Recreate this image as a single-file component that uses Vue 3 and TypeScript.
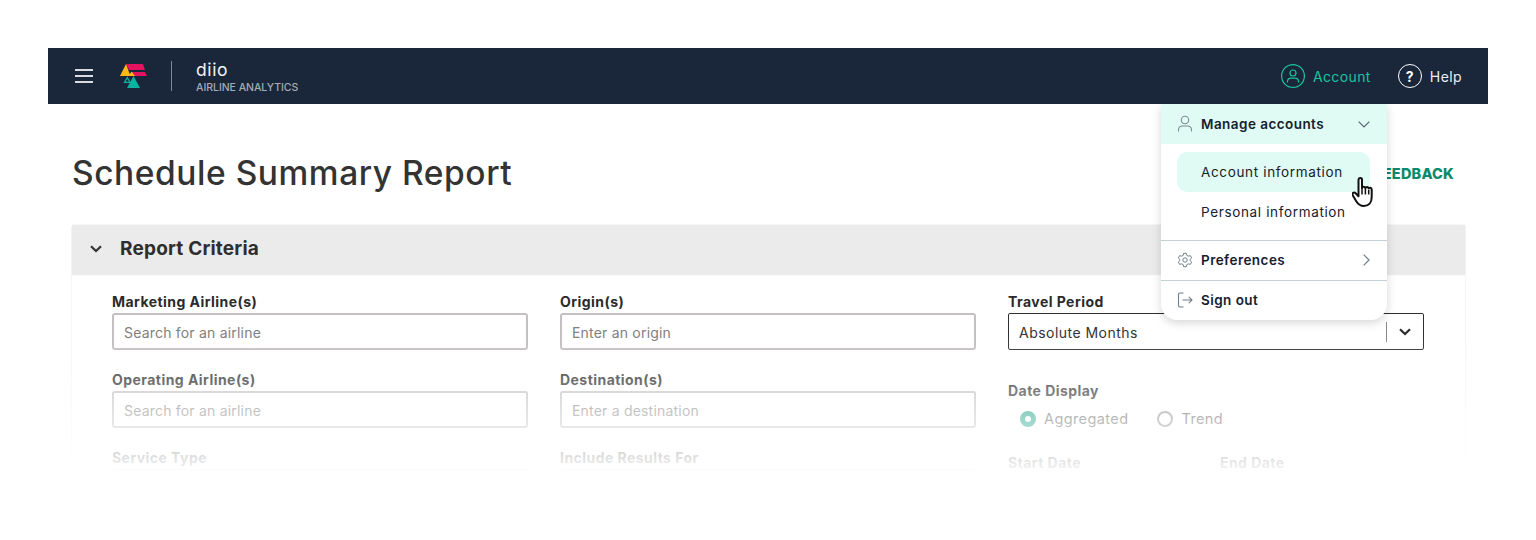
<script setup lang="ts">
interface Field { label: string; placeholder: string }
const col1: Field[] = [
  { label: 'Marketing Airline(s)', placeholder: 'Search for an airline' },
  { label: 'Operating Airline(s)', placeholder: 'Search for an airline' },
  { label: 'Service Type', placeholder: '' },
]
const col2: Field[] = [
  { label: 'Origin(s)', placeholder: 'Enter an origin' },
  { label: 'Destination(s)', placeholder: 'Enter a destination' },
  { label: 'Include Results For', placeholder: '' },
]
</script>

<template>
  <div class="page">
    <div class="shell">
      <header class="nav">
        <button class="burger" aria-label="menu"><i></i><i></i><i></i></button>
        <svg class="logo" viewBox="120 64 28 24" width="28" height="24">
          <polygon points="126,64 143,64 145,70 129,70" fill="#e5135f" />
          <polygon points="131,72 145,72 147,76 133,76" fill="#e5135f" />
          <polygon points="126,64 130.5,76 120,76" fill="#fdb913" />
          <polygon points="131.5,71.5 135,76 128.5,76" fill="#fdb913" />
          <polygon points="133.5,76 140,88 127,88" fill="#0db39e" />
          <path d="M127.3 77.5 L130 82.3 L124.5 82.3 Z" fill="none" stroke="#0db39e" stroke-width="1.3" />
        </svg>
        <span class="vline"></span>
        <div class="brand">
          <div class="brand-name">diio</div>
          <div class="brand-sub">AIRLINE ANALYTICS</div>
        </div>
        <div class="nav-right">
          <a class="nav-link account">
            <svg width="24" height="24" viewBox="0 0 24 24" fill="none" stroke="#19c4a0" stroke-width="1.2">
              <circle cx="12" cy="12" r="11.4" />
              <circle cx="12" cy="9" r="3" />
              <path d="M6.500 18.500v-1.200c0-2 1.800-3.200 3.600-3.200h3.800c1.800 0 3.600 1.200 3.600 3.200v1.200" />
            </svg>
            Account
          </a>
          <a class="nav-link help">
            <span class="help-circle">?</span>
            Help
          </a>
        </div>
      </header>

      <main class="main">
        <div class="title-row">
          <h1>Schedule Summary Report</h1>
          <a class="feedback">FEEDBACK</a>
        </div>

        <section class="card">
          <div class="card-head">
            <svg width="12" height="8" viewBox="0 0 12 8" fill="none" stroke="#333" stroke-width="2.2">
              <path d="M1 1.200l5 4.800 5-4.800" />
            </svg>
            <h2>Report Criteria</h2>
          </div>
          <div class="grid">
            <div class="col">
              <div v-for="f in col1" :key="f.label" class="field">
                <label>{{ f.label }}</label>
                <div class="input">{{ f.placeholder }}</div>
              </div>
            </div>
            <div class="col">
              <div v-for="f in col2" :key="f.label" class="field">
                <label>{{ f.label }}</label>
                <div class="input">{{ f.placeholder }}</div>
              </div>
            </div>
            <div class="col">
              <div class="field">
                <label>Travel Period</label>
                <div class="select">
                  <span>Absolute Months</span>
                  <span class="sel-div"></span>
                  <svg width="12" height="8" viewBox="0 0 12 8" fill="none" stroke="#2b2b2b" stroke-width="2.2">
                    <path d="M1 1.200l5 4.800 5-4.800" />
                  </svg>
                </div>
              </div>
              <div class="date-display">
                <label>Date Display</label>
                <div class="radios">
                  <span class="radio"><i class="dot on"></i>Aggregated</span>
                  <span class="radio"><i class="dot"></i>Trend</span>
                </div>
              </div>
              <div class="dates">
                <label>Start Date</label>
                <label>End Date</label>
              </div>
            </div>
          </div>
        </section>
      </main>

      <div class="fade"></div>

      <div class="menu">
        <div class="menu-row head">
          <svg class="mi" width="16" height="18" viewBox="0 0 16 18" fill="none" stroke="#7b8a94" stroke-width="1.1">
            <circle cx="8" cy="5" r="3.700" />
            <path d="M1.500 16.500v-1.500c0-2.500 2-4 4.200-4h4.600c2.200 0 4.200 1.500 4.200 4v1.500" />
          </svg>
          <span class="mt">Manage accounts</span>
          <svg class="chev" width="12" height="7" viewBox="0 0 12 7" fill="none" stroke="#56646e" stroke-width="1.2">
            <path d="M.7.7L6 6l5.300-5.300" />
          </svg>
        </div>
        <div class="subs">
          <div class="sub active">Account information</div>
          <div class="sub">Personal information</div>
        </div>
        <div class="menu-row line">
          <svg class="mi" width="16" height="16" viewBox="0 0 24 24" fill="none" stroke="#6f7f8a" stroke-width="1.5" stroke-linejoin="round">
            <circle cx="12" cy="12" r="3.300" />
            <path d="M10 2h4l.7 3 2.300 1.300 3-.9 2 3.500-2.300 2.100v2l2.300 2.100-2 3.500-3-.9L14.700 19l-.7 3h-4l-.7-3L7 17.700l-3 .9-2-3.500L4.300 13v-2L2 8.900l2-3.500 3 .9L9.300 5z" />
          </svg>
          <span class="mt">Preferences</span>
          <svg class="chev" width="7" height="12" viewBox="0 0 7 12" fill="none" stroke="#6f7f8a" stroke-width="1.200">
            <path d="M.7.7L6 6 .7 11.300" />
          </svg>
        </div>
        <div class="menu-row line last">
          <svg class="mi" width="16" height="16" viewBox="0 0 16 16" fill="none" stroke="#6f7f8a" stroke-width="1.100">
            <path d="M6.500 1H3a1.500 1.500 0 0 0-1.500 1.500v11A1.500 1.500 0 0 0 3 15h3.500" />
            <path d="M5.500 8h9.500M11.800 4.800L15 8l-3.200 3.200" />
          </svg>
          <span class="mt">Sign out</span>
        </div>
      </div>

      <svg class="hand" width="24" height="32" viewBox="0 0 24 32">
        <path d="M6.500 2.800c0-2.400 3.500-2.400 3.500 0v8.400c.3-2 3.200-2 3.400.1.300-1.800 3.100-1.700 3.300.3.500-1.500 3-1.200 3 .9v7.500c0 5.500-3 9-7.800 9-4 0-5.900-1.800-7.800-5l-3.400-5.700c-1.200-2 1.300-3.700 2.900-2.100l2.900 3z" fill="#fff" stroke="#111" stroke-width="2" stroke-linejoin="round" />
        <path d="M10 11.500v6M13.400 12v5.500M16.700 13v4.500" stroke="#111" stroke-width="1.500" fill="none" />
      </svg>
    </div>
  </div>
</template>

<style>
html, body { margin: 0; background: #fff; overflow: hidden; }
</style>

<style scoped>
.page {
  height: 540px;
  padding: 48px 48px 0;
  box-sizing: border-box;
  overflow: hidden;
  font-family: Inter, "Open Sans", "Liberation Sans", sans-serif;
  color: #2b2b2b;
}
.shell { position: relative; width: 1440px; height: 492px; }

.nav {
  height: 56px;
  background: #1a273b;
  display: flex;
  align-items: center;
  padding: 0 26px 0 27px;
  box-sizing: border-box;
  color: #fff;
}
.burger {
  width: 18px; height: 14px; padding: 0; border: 0; background: none;
  display: flex; flex-direction: column; justify-content: space-between;
  margin-right: 27px;
}
.burger i { display: block; height: 2px; background: #d9dbe0; }
.logo { margin-right: 23px; margin-top: -1px; }
.vline { width: 1px; height: 30px; background: #7d8794; margin-right: 24px; }
.brand { display: flex; flex-direction: column; padding-top: 2px; }
.brand-name { font-size: 17.500px; line-height: 20px; letter-spacing: .6px; color: #f2f3f5; }
.brand-sub { font-size: 10.500px; line-height: 14px; font-weight: 500; color: #a4abb5; letter-spacing: -.04px; margin-top: 1px; }
.nav-right { margin-left: auto; display: flex; align-items: center; gap: 27px; }
.nav-link { display: flex; align-items: center; font-size: 14px; }
.account { color: #19c4a0; gap: 8px; letter-spacing: .4px; }
.help { color: #eceef1; gap: 8px; letter-spacing: .4px; }
.help-circle {
  width: 24px; height: 24px; box-sizing: border-box; border: 1.500px solid #fff; border-radius: 50%;
  display: flex; align-items: center; justify-content: center;
  font-size: 14px; font-weight: 700; color: #fff;
}

.main { padding: 0 23px 0 24px; }
.title-row { height: 121px; box-sizing: border-box; padding: 16px 11px 0 0; display: flex; align-items: center; justify-content: space-between; }
h1 { margin: 0; font-size: 33.500px; font-weight: 500; color: #333; letter-spacing: .55px; }
.feedback { font-size: 14.500px; font-weight: 800; color: #0a8a6a; letter-spacing: .2px; margin-top: 1px; }

.card {
  border-radius: 3px;
  box-shadow: 0 0 2px rgba(0,0,0,.14);
  height: 320px;
}
.card-head {
  height: 49px;
  box-sizing: border-box;
  padding: 0 0 2px 18px;
  background: #ebebeb;
  display: flex;
  align-items: center;
  gap: 18px;
  box-shadow: 0 1px 1px rgba(0,0,0,.08);
}
h2 { margin: 0; font-size: 19px; font-weight: 700; color: #2e2e2e; letter-spacing: .2px; }

.grid {
  display: grid;
  grid-template-columns: repeat(3, 416px);
  column-gap: 32px;
  padding: 19px 0 0 40px;
}
.col { display: flex; flex-direction: column; }
.field { height: 78px; }
label { display: block; font-size: 14px; line-height: 17px; font-weight: 700; color: #2b2b2b; letter-spacing: .45px; }
.input {
  margin-top: 3px;
  height: 37px;
  box-sizing: border-box;
  border: 2px solid #c4bfc0;
  border-radius: 3px;
  padding: 1px 10px 0;
  display: flex;
  align-items: center;
  font-size: 14px;
  letter-spacing: .2px;
  color: #808080;
  background: #fff;
}
.select {
  margin-top: 3px;
  height: 37px;
  box-sizing: border-box;
  border: 1px solid #2f2f2f;
  border-radius: 2px;
  padding: 1px 12px 0 10px;
  display: flex;
  align-items: center;
  font-size: 14px;
  letter-spacing: .47px;
  color: #333;
}
.sel-div { width: 1px; height: 20px; background: #888; margin-left: auto; margin-right: 12px; }
.date-display { margin-top: 11px; }
.radios { display: flex; gap: 29px; padding: 11px 0 0 12px; }
.radio { display: flex; align-items: center; gap: 8px; font-size: 14.500px; letter-spacing: .4px; color: #555; }
.dot {
  width: 16px; height: 16px; box-sizing: border-box; border: 2px solid #8a8a8a; border-radius: 50%;
  display: inline-block;
}
.dot.on { border: 5.500px solid #0f9c80; background: #fff; }
.dates { display: grid; grid-template-columns: 212px 200px; margin-top: 27px; }

.fade {
  position: absolute;
  left: -48px; right: -48px; top: 288px; height: 204px;
  background: linear-gradient(to bottom, rgba(255,255,255,0) 0, rgba(255,255,255,.94) 134px, #fff 134px);
  pointer-events: none;
}

.menu {
  position: absolute;
  left: 1113px; top: 56px;
  width: 226px; height: 216px;
  background: #fff;
  border-radius: 0 0 16px 16px;
  box-shadow: 0 3px 10px rgba(0,0,0,.16);
  font-size: 13.500px;
  color: #16202e;
  overflow: hidden;
}
.menu-row { height: 40px; display: flex; align-items: center; padding: 0 17px 0 16px; box-sizing: border-box; }
.menu-row.head { background: #e0fbf3; }
.menu-row.line { border-top: 1px solid #c6d0d4; padding-bottom: 2px; }
.mi { margin-right: 8px; flex: none; }
.mt { font-weight: 600; letter-spacing: .45px; }
.chev { margin-left: auto; }
.subs { padding: 8px 17px 8px 16px; }
.sub { height: 40px; display: flex; align-items: center; padding-left: 24px; letter-spacing: .65px; border-radius: 10px; }
.sub.active { background: #e0fbf3; }

.hand { position: absolute; left: 1304px; top: 129px; }
</style>
